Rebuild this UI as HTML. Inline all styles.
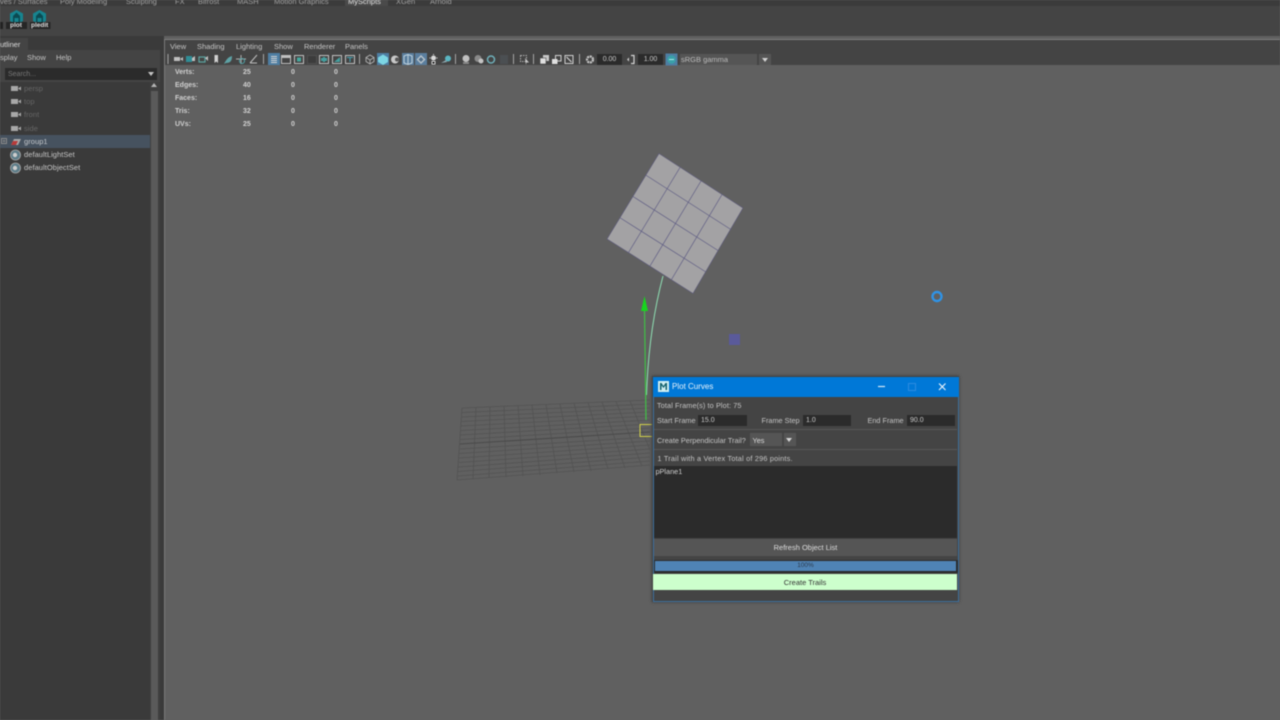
<!DOCTYPE html>
<html><head><meta charset="utf-8"><style>
html,body{margin:0;padding:0;width:1280px;height:720px;overflow:hidden;background:#606060}
body{font-family:"Liberation Sans",sans-serif;font-size:7.5px;color:#c8c8c8}
#r{position:absolute;left:0;top:0;width:1280px;height:720px;overflow:hidden;background:#606060;filter:blur(.4px)}
.a{position:absolute;white-space:nowrap}
.b{position:absolute}
.tab{position:absolute;top:-3px;font-size:7.5px;color:#a0a0a0;line-height:10px;white-space:nowrap}
.m{position:absolute;top:42px;line-height:10px;font-size:7.5px;color:#c4c4c4;white-space:nowrap}
.ol{position:absolute;left:24px;font-size:7.5px;line-height:10px;letter-spacing:.05px;white-space:nowrap}
.st{position:absolute;font-size:7px;font-weight:bold;color:#d0d0d0;line-height:9px}
.fld{position:absolute;background:#2b2b2b;color:#c8c8c8;font-size:7px;line-height:11px;height:11px}
.dl{position:absolute;font-size:7.3px;line-height:10px;color:#c4c4c4;white-space:nowrap}
</style></head><body><div id="r">
<!-- top bars -->
<div class="b" style="left:0;top:0;width:1280px;height:6px;background:#3b3b3b"></div>
<div class="b" style="left:345px;top:0;width:43px;height:6px;background:#4a4a4a"></div>
<div class="tab" style="left:0">ves / Surfaces</div>
<div class="tab" style="left:60px">Poly Modeling</div>
<div class="tab" style="left:126px">Sculpting</div>
<div class="tab" style="left:175px">FX</div>
<div class="tab" style="left:198px">Bifrost</div>
<div class="tab" style="left:237px">MASH</div>
<div class="tab" style="left:274px">Motion Graphics</div>
<div class="tab" style="left:348px;color:#e4e4e4">MyScripts</div>
<div class="tab" style="left:396px">XGen</div>
<div class="tab" style="left:430px">Arnold</div>
<div class="b" style="left:0;top:6px;width:1280px;height:30px;background:#444"></div>
<!-- shelf icons -->
<svg class="b" style="left:0;top:9px" width="60" height="22">
<path d="M16.500 1L23 4.500V12L16.500 15.500L10 12V4.500Z" fill="#17848f"/>
<path d="M13 13V7L16.500 3.500L20 7V13H18.500V9H14.500V13Z" fill="#0b4a52"/>
<path d="M39.500 1L46 4.500V12L39.500 15.500L33 12V4.500Z" fill="#17848f"/>
<path d="M36 13V7L39.500 3.500L43 7V13H41.500V9H37.500V13Z" fill="#0b4a52"/>
<rect x="0" y="13" width="3" height="7" fill="#222"/>
<rect x="6" y="13" width="21" height="7" fill="#262626"/>
<rect x="30" y="13" width="20.500" height="7" fill="#262626"/>
</svg>
<div class="a" style="left:10px;top:21px;font-size:6.5px;line-height:9px;font-weight:bold;color:#ddd">plot</div>
<div class="a" style="left:31px;top:21px;font-size:6.5px;line-height:9px;font-weight:bold;color:#ddd">pledit</div>
<!-- outliner -->
<div class="b" style="left:0;top:36px;width:160px;height:14px;background:#3a3a3a"></div>
<div class="b" style="left:0;top:38px;width:28px;height:12px;background:#444"></div>
<div class="b" style="left:0;top:50px;width:160px;height:670px;background:#3a3a3a"></div>
<div class="b" style="left:0;top:50px;width:160px;height:32px;background:#444"></div>
<div class="a" style="left:0;top:40px;line-height:10px;color:#ddd;font-size:7.5px">utliner</div>
<div class="a" style="left:0;top:52.500px;line-height:10px;color:#c4c4c4">splay</div>
<div class="a" style="left:27px;top:52.500px;line-height:10px;color:#c4c4c4">Show</div>
<div class="a" style="left:56px;top:52.500px;line-height:10px;color:#c4c4c4">Help</div>
<div class="b" style="left:5px;top:68px;width:152px;height:12px;background:#2b2b2b"></div>
<div class="a" style="left:8px;top:70px;line-height:9px;color:#777;font-size:7px">Search...</div>
<div class="b" style="left:148px;top:72px;border-left:3.500px solid transparent;border-right:3.500px solid transparent;border-top:4px solid #c4c4c4"></div>
<div class="b" style="left:150px;top:82px;width:10px;height:638px;background:#3f3f3f"></div>
<div class="b" style="left:151px;top:91px;width:7px;height:629px;background:#5a5a5a"></div>
<div class="b" style="left:151px;top:83px;border-left:3.500px solid transparent;border-right:3.500px solid transparent;border-bottom:4px solid #b4b4b4"></div>
<div class="b" style="left:0;top:135px;width:150px;height:13px;background:#46525f"></div>
<div class="b" style="left:160px;top:36px;width:4px;height:684px;background:#3a3a3a"></div>
<svg class="b" style="left:0;top:82px" width="30" height="95">
<g fill="#a8a8a8">
<rect x="11" y="4" width="7" height="5"/><path d="M18 6.500L21 4.500V8.500Z"/>
<rect x="11" y="17" width="7" height="5"/><path d="M18 19.500L21 17.500V21.500Z"/>
<rect x="11" y="30" width="7" height="5"/><path d="M18 32.500L21 30.500V34.500Z"/>
<rect x="11" y="44" width="7" height="5"/><path d="M18 46.500L21 44.500V48.500Z"/>
</g>
<rect x="1.500" y="56.500" width="5" height="5" fill="none" stroke="#8a8a8a"/>
<path d="M2.500 59H5.500M4 57.500V60.500" stroke="#8a8a8a" stroke-width=".7"/>
<path d="M11 63L14 57H21L18 63Z" fill="#a8a8a8"/><path d="M11 63L13 59H18L16 63Z" fill="#b83a3a"/>
<circle cx="15.500" cy="73" r="5" fill="#5d7d89" stroke="#a8a8a8" stroke-width=".8"/><circle cx="15" cy="73" r="2.200" fill="#ccc"/>
<circle cx="15.500" cy="86" r="5" fill="#5d7d89" stroke="#a8a8a8" stroke-width=".8"/><circle cx="15" cy="86" r="2.200" fill="#ccc"/>
</svg>
<div class="ol" style="top:83.500px;color:#666">persp</div>
<div class="ol" style="top:96.500px;color:#666">top</div>
<div class="ol" style="top:110px;color:#666">front</div>
<div class="ol" style="top:123.500px;color:#666">side</div>
<div class="ol" style="top:136.500px;color:#c4c8cc">group1</div>
<div class="ol" style="top:150px;color:#c4c4c4">defaultLightSet</div>
<div class="ol" style="top:163px;color:#c4c4c4">defaultObjectSet</div>
<!-- viewport frame -->
<div class="b" style="left:164px;top:39px;width:1116px;height:1px;background:#7e7e7e"></div>
<div class="b" style="left:164px;top:40px;width:1116px;height:25px;background:#444"></div>
<div class="b" style="left:164px;top:39px;width:1px;height:681px;background:#7a7a7a"></div>
<div class="m" style="left:170px">View</div>
<div class="m" style="left:197px">Shading</div>
<div class="m" style="left:236px">Lighting</div>
<div class="m" style="left:274px">Show</div>
<div class="m" style="left:304px">Renderer</div>
<div class="m" style="left:345px">Panels</div>
<!-- toolbar -->
<svg class="b" style="left:164px;top:52px" width="620" height="14">
<g transform="translate(-164,-52)">
<g fill="#a5a5a5">
<rect x="167.500" y="54" width="1" height="10"/><rect x="263" y="54" width="1" height="10"/><rect x="359" y="54" width="1" height="10"/><rect x="455" y="54" width="1" height="10"/><rect x="513" y="54" width="1" height="10"/><rect x="533" y="54" width="1" height="10"/><rect x="579" y="54" width="1" height="10"/>
</g>
<rect x="268" y="53" width="12" height="12" fill="#4e7ea3"/>
<rect x="377" y="53" width="12" height="12" fill="#4e7ea3"/>
<rect x="402" y="53" width="12" height="12" fill="#5a7e9e"/>
<rect x="415" y="53" width="12" height="12" fill="#5a7e9e"/>
<path d="M174 57H180V61H174ZM180 59L183 57V61Z" fill="#c0c0c0"/>
<path d="M186 56H192V62H186Z" fill="#2f8d96"/><path d="M192 58L195 56V61H192Z" fill="#c0c0c0"/>
<rect x="199" y="57" width="6" height="5" fill="none" stroke="#5ba3a0" stroke-width="1.200"/><path d="M205 58L208 56V61Z" fill="#c0c0c0"/>
<path d="M214.500 55H218V63L216.200 61.500L214.500 63Z" fill="#d0d0d0"/>
<path d="M224 64C226 60 228 57 232 56C232 60 231 63 226 63Z" fill="#5ea2a5"/>
<path d="M236 59H246M241 55V64" stroke="#b0b0b0"/><circle cx="242" cy="61" r="2.500" fill="none" stroke="#4fa3a8"/>
<path d="M250 63L257 55M250 63H257" stroke="#c0c0c0"/>
<g fill="none" stroke="#d4d4d4">
<path d="M271 56.500H277M271 58.500H277M271 60.500H277M271 62.500H277" stroke-width=".9"/>
<rect x="281.500" y="55.500" width="9" height="8" stroke="#c0c0c0"/><rect x="294.500" y="55.500" width="9" height="8" stroke="#c0c0c0"/>
<rect x="307.500" y="55.500" width="9" height="8" stroke="#505050" fill="#3c3c3c"/>
<rect x="319.500" y="55.500" width="9" height="8" stroke="#c0c0c0"/><rect x="332.500" y="55.500" width="9" height="8" stroke="#c0c0c0"/><rect x="345.500" y="55.500" width="9" height="8" stroke="#c0c0c0"/>
</g>
<rect x="282" y="56" width="8" height="2" fill="#c0c0c0"/>
<rect x="297" y="57.500" width="4" height="4" fill="#45a89e"/>
<path d="M321 58H323V57H325V58H327V61H325V62H323V61H321Z" fill="#45a0a0"/>
<path d="M334 62L340 57V62Z" fill="#45a0a0"/>
<path d="M347 57.500H353M350 57.500V62" stroke="#45a0b0"/>
<path d="M370 55L374 57.500V61.500L370 64L366 61.500V57.500ZM366 57.500L370 60L374 57.500M370 60V64" fill="none" stroke="#b8b8b8" stroke-width=".8"/>
<path d="M383 54.500L388 57.500V62L383 65L378 62V57.500Z" fill="#7dd6e4"/>
<circle cx="395" cy="59.500" r="4" fill="#c8c8c8"/><circle cx="397" cy="59.500" r="2" fill="#555"/>
<path d="M404 56L408 54.500L412 56V63L408 64.500L404 63ZM408 54.500V64.500" fill="none" stroke="#bcd0dc"/>
<path d="M421 55L425.500 59.500L421 64L416.500 59.500Z" fill="#b8c4cc"/><path d="M418.500 59.500L421 57L423.500 59.500L421 62Z" fill="#52708a"/>
<circle cx="433.500" cy="58" r="2.500" fill="#d8d8d8"/><path d="M433.500 54V55M429.500 58H430.500M436.500 58H437.500M432 61.500H435V64H432Z" stroke="#d8d8d8"/>
<circle cx="448" cy="58.500" r="3" fill="#5bb6c2"/><path d="M441 63L446 60L447 62Z" fill="#8ca8b0"/>
<circle cx="466" cy="58.500" r="3.500" fill="#c0c0c0"/><rect x="463" y="62" width="6" height="2" fill="#888"/>
<circle cx="478" cy="58.500" r="3.500" fill="#8a8a8a"/><circle cx="481" cy="61" r="2.500" fill="#c4c4c4"/>
<circle cx="491" cy="59.500" r="3.500" fill="none" stroke="#6fb0ba" stroke-width="1.500"/>
<rect x="500" y="55" width="8" height="9" fill="#4b4f52"/>
<rect x="520.500" y="55.500" width="6" height="6" fill="none" stroke="#b0b0b0" stroke-dasharray="1.500 1"/><path d="M525 58L529 62.500L526.500 62.500L526 65Z" fill="#c8c8c8"/>
<rect x="543" y="55" width="6" height="6" fill="#c8c8c8"/><rect x="540" y="58" width="6" height="6" fill="#e0e0e0" stroke="#444" stroke-width=".6"/>
<rect x="555.500" y="55.500" width="5.500" height="5.500" fill="none" stroke="#d0d0d0"/><rect x="552" y="59" width="5.500" height="5" fill="#e0e0e0"/>
<rect x="565" y="55.500" width="8" height="8" fill="none" stroke="#d0d0d0"/><path d="M566.500 57L571.500 62" stroke="#d0d0d0" stroke-width="1.200"/>
<circle cx="590" cy="59.500" r="3" fill="none" stroke="#c8c8c8" stroke-width="2.200" stroke-dasharray="2 .7"/>
<path d="M627 59.500L629 57.500V61.500Z" fill="#ccc"/><path d="M631 55.500H634V63.500H631" fill="none" stroke="#d4d4d4" stroke-width="1.200"/>
<rect x="665.500" y="53.500" width="12" height="12" fill="#4e7ea3"/>
<circle cx="671.500" cy="59.500" r="4.300" fill="#3aa0a8"/><path d="M669 59.500H674" stroke="#aee" stroke-width="1"/>
</g>
</svg>
<div class="fld" style="left:597px;top:54px;width:25px;text-align:center">0.00</div>
<div class="fld" style="left:638px;top:54px;width:25px;text-align:center">1.00</div>
<div class="a" style="left:680px;top:54px;width:77px;height:11px;background:#555;line-height:11px;color:#bbb;font-size:7.5px;text-indent:1px">sRGB gamma</div>
<div class="b" style="left:759px;top:54px;width:12px;height:11px;background:#555"></div>
<div class="b" style="left:762px;top:57.500px;border-left:3.500px solid transparent;border-right:3.500px solid transparent;border-top:4px solid #d0d0d0"></div>
<!-- stats -->
<div class="st" style="left:175px;top:67.500px">Verts:</div><div class="st" style="left:243px;top:67.500px">25</div><div class="st" style="left:291px;top:67.500px">0</div><div class="st" style="left:334px;top:67.500px">0</div>
<div class="st" style="left:175px;top:80.500px">Edges:</div><div class="st" style="left:243px;top:80.500px">40</div><div class="st" style="left:291px;top:80.500px">0</div><div class="st" style="left:334px;top:80.500px">0</div>
<div class="st" style="left:175px;top:93.500px">Faces:</div><div class="st" style="left:243px;top:93.500px">16</div><div class="st" style="left:291px;top:93.500px">0</div><div class="st" style="left:334px;top:93.500px">0</div>
<div class="st" style="left:175px;top:107px">Tris:</div><div class="st" style="left:243px;top:107px">32</div><div class="st" style="left:291px;top:107px">0</div><div class="st" style="left:334px;top:107px">0</div>
<div class="st" style="left:175px;top:120px">UVs:</div><div class="st" style="left:243px;top:120px">25</div><div class="st" style="left:291px;top:120px">0</div><div class="st" style="left:334px;top:120px">0</div>
<!-- scene -->
<svg class="b" style="left:0;top:0" width="1280" height="720">
<g stroke="#535353" stroke-width=".8" fill="none">
<path d="M462 408L650 400M462 412.500L650 404M462 417L650 408M461 421.500L650 412M461 426L650 416M461 430.500L650 420M460 435L650 424M460 439.500L650 428M460 449L650 437M459 453.500L650 441M459 458L650 445M459 462.500L650 449M458 467L650 453M458 471.500L650 457M458 476L650 461M457 480L650 465"/>
<path d="M462 408L457 480M476 407.500L473 479M490 407L489 478M504 406L506 477M518 405.500L523 476M532 405L540 475M546 404.500L557 473M560 404L574 472M574 403L591 471M588 402.500L608 469M602 402L625 468M616 401.500L642 466M630 401L650 450"/>
</g>
<path d="M460 444L650 432" stroke="#4a4a4a" stroke-width="1"/>
<path d="M659 153.500L743 208L693 293.500L607 239Z" fill="#a3a2a4" stroke="#5c5a78" stroke-width=".7"/>
<g stroke="#5f5d84" stroke-width=".7" fill="none">
<path d="M646 175.250L730.500 229.250M633 196.500L718 250.500M620 217.750L705.500 271.750"/>
<path d="M680 167.500L628.500 252.500M701 181L650 266M722 194.500L671.500 279.500"/>
</g>
<path d="M663 276C654 310 648 350 646.500 395" stroke="#8fe0b4" stroke-width="1" fill="none"/>
<path d="M644.500 310L646 420" stroke="#3fc045" stroke-width="1.200" fill="none"/>
<path d="M644.500 296L648 311H641Z" fill="#18d41e"/>
<rect x="729" y="334" width="11" height="11" fill="#5a5a9a"/>
<path d="M652 424.500H640V436.500H652" fill="none" stroke="#d2d24a" stroke-width="1"/>
<circle cx="937" cy="296.500" r="4.500" fill="none" stroke="#2f93e6" stroke-width="2.400"/>
</svg>
<!-- dialog -->
<div class="b" style="left:652px;top:376px;width:307px;height:226px;background:#444;box-shadow:0 0 3px #3a3a3a"></div>
<div class="b" style="left:652.500px;top:377px;width:306px;height:224.500px;border:1px solid #3d6f9e;box-sizing:border-box"></div>
<div class="b" style="left:653px;top:377px;width:306px;height:20px;background:#0078d7"></div>
<svg class="b" style="left:658px;top:381px" width="11" height="11"><rect width="11" height="11" fill="#cfeef2"/><path d="M2 9V2H3.500L5.500 5L7.500 2H9V9H7.500V4.500L5.500 7L3.500 4.500V9Z" fill="#14626e"/></svg>
<div class="a" style="left:672px;top:382px;font-size:8px;line-height:10px;color:#e6f2fb">Plot Curves</div>
<svg class="b" style="left:875px;top:380px" width="75" height="14">
<path d="M3 6.500H10" stroke="#d6e8f6" stroke-width="1.200"/>
<rect x="33.500" y="3.500" width="7" height="7" fill="none" stroke="#2d8be0"/>
<path d="M64 3.500L70.500 10M70.500 3.500L64 10" stroke="#e6f2fb" stroke-width="1.200"/>
</svg>
<div class="dl" style="left:657px;top:400.500px;letter-spacing:.1px">Total Frame(s) to Plot: 75</div>
<div class="dl" style="left:657px;top:416px">Start Frame</div>
<div class="fld" style="left:698px;top:415px;width:49px;text-indent:3px">15.0</div>
<div class="dl" style="left:761.500px;top:416px">Frame Step</div>
<div class="fld" style="left:803px;top:415px;width:48px;text-indent:3px">1.0</div>
<div class="dl" style="left:867.500px;top:416px">End Frame</div>
<div class="fld" style="left:907px;top:415px;width:48px;text-indent:3px">90.0</div>
<div class="b" style="left:654px;top:429px;width:303px;height:1px;background:#575757"></div>
<div class="dl" style="left:657px;top:435.500px">Create Perpendicular Trail?</div>
<div class="b" style="left:750px;top:433px;width:32px;height:13px;background:#555"></div>
<div class="b" style="left:784px;top:433px;width:12px;height:13px;background:#555"></div>
<div class="dl" style="left:752.500px;top:435.500px;color:#ddd">Yes</div>
<div class="b" style="left:786px;top:438px;border-left:3.500px solid transparent;border-right:3.500px solid transparent;border-top:4px solid #d4d4d4"></div>
<div class="b" style="left:654px;top:449px;width:303px;height:1px;background:#575757"></div>
<div class="dl" style="left:657.500px;top:454px;letter-spacing:.2px">1 Trail with a Vertex Total of 296 points.</div>
<div class="b" style="left:654px;top:466px;width:303px;height:72px;background:#2b2b2b"></div>
<div class="dl" style="left:655.500px;top:467px;color:#d0d0d0">pPlane1</div>
<div class="b" style="left:654px;top:539px;width:303px;height:17px;background:#555"></div>
<div class="a" style="left:654px;top:542px;width:303px;text-align:center;font-size:7.500px;line-height:11px;color:#ddd">Refresh Object List</div>
<div class="b" style="left:653.500px;top:559.500px;width:304px;height:13px;background:#2b2b2b"></div>
<div class="b" style="left:655px;top:561px;width:301px;height:10px;background:#4f83b5"></div>
<div class="a" style="left:654px;top:561px;width:303px;text-align:center;font-size:6.500px;line-height:10px;color:#2c3a4c">100%</div>
<div class="b" style="left:653px;top:574px;width:304px;height:16px;background:#ccffcc"></div>
<div class="a" style="left:653px;top:577px;width:304px;text-align:center;font-size:7.500px;line-height:11px;color:#333">Create Trails</div>
</div></body></html>
